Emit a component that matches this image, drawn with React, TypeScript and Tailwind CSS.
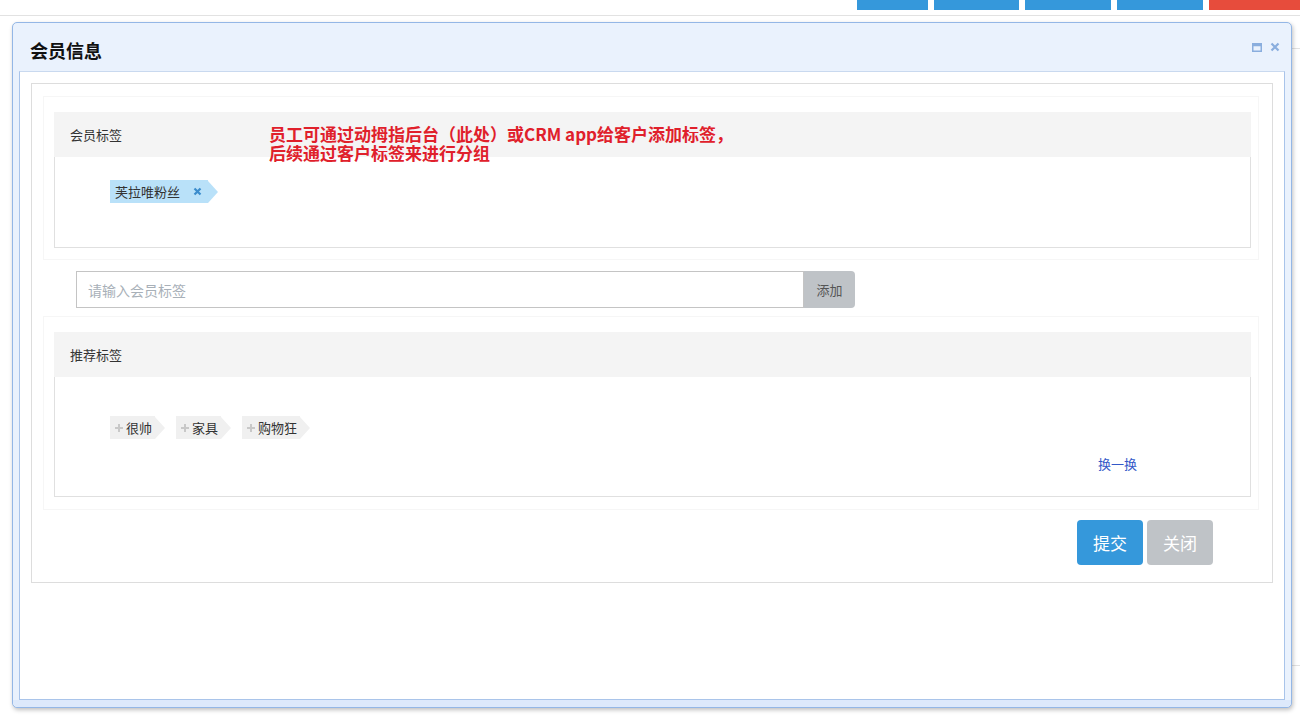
const cjk = { fontFamily: '"Noto Sans CJK SC", "Noto Sans", sans-serif' };

function TagArrow({ color }: { color: string }) {
  return (
    <span
      className="h-0 w-0 border-y-[11.5px] border-l-[10px] border-y-transparent"
      style={{ borderLeftColor: color }}
    />
  );
}

function SuggestTag({ label }: { label: string }) {
  return (
    <div className="flex items-center">
      <span className="flex h-[23px] items-center bg-[#f0f0f0] pl-[5px] pr-[3px] text-[13px] text-[#333]">
        <svg className="mr-[3px]" width="8" height="8" viewBox="0 0 8 8">
          <path d="M4 0 V8 M0 4 H8" stroke="#c8c8c8" strokeWidth="2" />
        </svg>
        {label}
      </span>
      <TagArrow color="#f0f0f0" />
    </div>
  );
}

export default function App() {
  return (
    <div className="relative h-[720px] w-[1300px] overflow-hidden bg-white" style={cjk}>
      {/* top toolbar behind the dialog */}
      <div className="flex h-[16px] justify-end border-b border-[#e2e2e2]">
        <div className="flex h-[10px] gap-[6px]">
          <div className="w-[71px] bg-[#3598db]" />
          <div className="w-[85px] bg-[#3598db]" />
          <div className="w-[86px] bg-[#3598db]" />
          <div className="w-[86px] bg-[#3598db]" />
          <div className="w-[91px] bg-[#e74c3c]" />
        </div>
      </div>
      <div className="absolute right-0 top-[48px] h-px w-[10px] bg-[#e2e2e2]" />
      <div className="absolute right-0 top-[665px] h-px w-[10px] bg-[#e2e2e2]" />

      {/* dialog */}
      <div className="absolute left-[12px] top-[22px] flex h-[686px] w-[1280px] flex-col rounded-[5px] border border-[#94b7e6] bg-[#eaf2fd] shadow-[1px_2px_4px_rgba(0,0,0,0.25)]">
        <div className="flex h-[48px] shrink-0 items-center justify-between pl-[17px] pr-[11px]">
          <h1 className="pt-[6px] text-[18px] font-bold text-[#111]">会员信息</h1>
          <div className="flex items-center gap-[8px] text-[#8aaede]">
            <svg width="10" height="9" viewBox="0 0 10 9">
              <rect x="0.75" y="0.75" width="8.5" height="7.5" fill="none" stroke="currentColor" strokeWidth="1.5" />
              <rect x="0.75" y="0.75" width="8.5" height="2.5" fill="currentColor" />
            </svg>
            <svg width="10" height="10" viewBox="0 0 10 10">
              <path d="M1.5 1.5 L8.5 8.5 M8.5 1.5 L1.5 8.5" stroke="currentColor" strokeWidth="2.2" />
            </svg>
          </div>
        </div>

        <div className="mx-[6px] flex-1 border border-t-[#c9d9ef] border-x-[#a9c4ea] border-b-[#a9c4ea] bg-white px-[11px] pt-[11px]">
          <div className="flex h-[500px] flex-col border border-[#dddddd] pb-[16px] pt-[12px]">
            {/* member tags */}
            <div className="ml-[11px] mr-[13px] border border-[#f6f6f6] pb-[11px] pl-[10px] pr-[7px] pt-[15px]">
              <div className="relative flex h-[45px] items-center bg-[#f4f4f4] px-[16px] text-[13px] text-[#333]">
                会员标签
                <div className="absolute left-[215px] top-[12px] text-[17px] font-bold leading-[19px] text-[#e0202b]">
                  <div>员工可通过动拇指后台（此处）或CRM app给客户添加标签，</div>
                  <div>后续通过客户标签来进行分组</div>
                </div>
              </div>
              <div className="h-[91px] border border-t-0 border-[#e0e0e0] pl-[55px] pt-[23px]">
                <div className="flex items-center">
                  <span className="flex h-[23px] items-center bg-[#b9e1f9] pl-[5px] pr-[6px] text-[13px] text-[#333]">
                    芙拉唯粉丝
                    <svg className="ml-[13px]" width="9" height="9" viewBox="0 0 9 9">
                      <path d="M1.5 1.5 L7.5 7.5 M7.5 1.5 L1.5 7.5" stroke="#3b8ccc" strokeWidth="2.2" />
                    </svg>
                  </span>
                  <TagArrow color="#b9e1f9" />
                </div>
              </div>
            </div>

            {/* input */}
            <div className="ml-[44px] mt-[11px] flex h-[37px] w-[779px]">
              <input
                className="h-full flex-1 border border-[#c4c4c4] px-[11px] text-[14px] text-[#333] outline-none placeholder:text-[#a8b0b8]"
                placeholder="请输入会员标签"
                style={cjk}
              />
              <button className="h-full w-[51px] rounded-r-[4px] bg-[#bfc3c7] text-[13px] text-[#555]">
                添加
              </button>
            </div>

            {/* suggested tags */}
            <div className="ml-[11px] mr-[13px] mt-[8px] border border-[#f6f6f6] pb-[12px] pl-[10px] pr-[7px] pt-[15px]">
              <div className="flex h-[45px] items-center bg-[#f4f4f4] px-[16px] text-[13px] text-[#333]">
                推荐标签
              </div>
              <div className="relative h-[120px] border border-t-0 border-[#e0e0e0] pl-[55px] pt-[39px]">
                <div className="flex gap-[11px]">
                  <SuggestTag label="很帅" />
                  <SuggestTag label="家具" />
                  <SuggestTag label="购物狂" />
                </div>
                <a className="absolute left-[1043px] top-[77px] text-[13px] text-[#3358c8]" href="#">
                  换一换
                </a>
              </div>
            </div>

            {/* actions */}
            <div className="mr-[59px] mt-[10px] flex justify-end gap-[4px]">
              <button className="h-[45px] w-[66px] rounded-[4px] bg-[#3598db] text-[17px] text-white">提交</button>
              <button className="h-[45px] w-[66px] rounded-[4px] bg-[#bfc3c7] text-[17px] text-white">关闭</button>
            </div>
          </div>
        </div>
        <div className="h-[7px] shrink-0 rounded-b-[5px] bg-[#dde9fb]" />
      </div>
    </div>
  );
}
